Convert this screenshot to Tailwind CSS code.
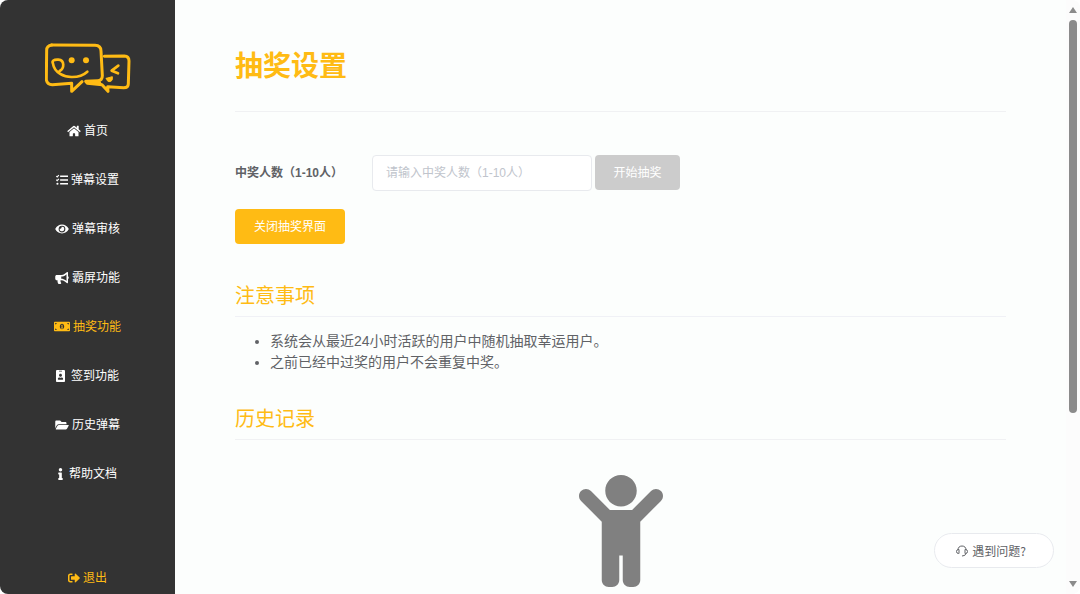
<!DOCTYPE html>
<html lang="zh-CN">

<head>
	<meta charset="UTF-8" />
	<meta name="viewport" content="width=device-width, initial-scale=1.0" />
	<script src="https://cdn.jsdelivr.net/npm/@tailwindcss/browser@4"></script>
	<title>抽奖设置</title>
</head>

<body class="bg-white text-xs text-[#606266] font-['Liberation_Sans','Noto_Sans_CJK_SC',sans-serif]">
	<div class="flex h-screen overflow-hidden rounded-lg bg-[#fcfefd]">

		<!-- sidebar -->
		<aside class="flex w-[175px] shrink-0 flex-col items-center bg-[#333] pt-[43px] pb-2 text-white">
			<a href="#" aria-label="首页">
				<svg class="h-[51px] w-[86px]" viewBox="2 0 258 153" fill="none" stroke="#ffbb14" stroke-width="9"
					stroke-linecap="round" stroke-linejoin="round">
					<path d="M22 6L152 7Q170 8 170 24L174 98Q174 112 160 113L124 115L129 121L173 125L191 145L190 131L238 134Q252 134 252 122L254 54Q254 40 240 39L180 40" />
					<path d="M22 6Q7 8 7 22L6 110Q8 124 24 125L82 121L82 145L113 116" />
					<path d="M128 117L166 115L171 124L134 122Z" fill="#ffbb14" stroke-width="4" />
					<path d="M46 84C60 76 62 52 42 50C28 49 22 54 26 62C30 90 60 103 84 102C104 102 118 96 129 86" stroke-width="8" />
					<path d="M222 68L202 83L221 91" stroke-width="8" />
					<path d="M186 106L204 101Q206 116 194 116Q188 116 186 106Z" fill="#ffbb14" stroke-width="3" />
					<circle cx="82" cy="52" r="9" fill="#ffbb14" stroke="none" />
					<circle cx="125" cy="52" r="9" fill="#ffbb14" stroke="none" />
				</svg>
			</a>

			<nav class="mt-3 flex w-full flex-col">
				<a href="#" class="flex h-[49px] items-center justify-center gap-[3px]">
					<svg class="h-3 w-[14px] fill-current" viewBox="0 0 576 512"><path d="M280.37 148.26L96 300.11V464a16 16 0 0 0 16 16l112.06-.29a16 16 0 0 0 15.92-16V368a16 16 0 0 1 16-16h64a16 16 0 0 1 16 16v95.64a16 16 0 0 0 16 16.05L464 480a16 16 0 0 0 16-16V300L295.67 148.26a12.19 12.19 0 0 0-15.3 0zM571.6 251.47L488 182.56V44.05a12 12 0 0 0-12-12h-56a12 12 0 0 0-12 12v72.61L318.47 43a48 48 0 0 0-61 0L4.34 251.47a12 12 0 0 0-1.6 16.9l25.5 31A12 12 0 0 0 45.15 301l235.22-193.74a12.19 12.19 0 0 1 15.3 0L530.9 301a12 12 0 0 0 16.9-1.6l25.5-31a12 12 0 0 0-1.7-16.93z" /></svg>
					<span>首页</span>
				</a>
				<a href="#" class="flex h-[49px] items-center justify-center gap-[3px]">
					<svg class="size-3" viewBox="0 0 512 512" fill="none" stroke="currentColor" stroke-width="48">
						<path d="M12 88L50 124L122 46M12 246L50 282L122 204" />
						<path d="M176 96H512M176 256H512M176 416H512" stroke-width="74" />
						<circle cx="62" cy="416" r="46" fill="currentColor" stroke="none" />
					</svg>
					<span>弹幕设置</span>
				</a>
				<a href="#" class="flex h-[49px] items-center justify-center gap-[3px]">
					<svg class="h-3 w-[14px] fill-current" viewBox="0 0 576 512"><path d="M572.52 241.4C518.29 135.59 410.93 64 288 64S57.68 135.64 3.48 241.41a32.35 32.35 0 0 0 0 29.19C57.71 376.41 165.07 448 288 448s230.32-71.64 284.52-177.41a32.35 32.35 0 0 0 0-29.19zM288 400a144 144 0 1 1 144-144 143.93 143.93 0 0 1-144 144zm0-240a95.31 95.31 0 0 0-25.31 3.79 47.85 47.85 0 0 1-66.9 66.9A95.78 95.78 0 1 0 288 160z" /></svg>
					<span>弹幕审核</span>
				</a>
				<a href="#" class="flex h-[49px] items-center justify-center gap-[3px]">
					<svg class="h-3 w-[14px] fill-current" viewBox="0 0 576 512"><path d="M576 240c0-23.63-12.95-44.04-32-55.12V32.01C544 23.26 537.02 0 512 0c-7.12 0-14.19 2.38-19.98 7.02l-85.03 68.03C364.28 109.19 310.66 128 256 128H64c-35.35 0-64 28.65-64 64v96c0 35.35 28.65 64 64 64h33.7c-1.39 10.48-2.18 21.14-2.18 32 0 39.77 9.26 77.35 25.56 110.94 5.19 10.69 16.52 17.06 28.4 17.06h74.28c26.05 0 41.69-29.84 25.9-50.56-16.4-21.52-26.15-48.36-26.15-77.44 0-11.11 1.62-21.79 4.41-32H256c54.66 0 108.28 18.81 150.98 52.95l85.03 68.03a32.023 32.023 0 0 0 19.98 7.02c24.92 0 32-22.78 32-32V295.13C563.05 284.04 576 263.63 576 240zm-96 141.42l-33.05-26.44C392.95 311.78 325.12 288 256 288v-96c69.12 0 136.95-23.78 190.95-66.98L480 98.58v282.84z" /></svg>
					<span>霸屏功能</span>
				</a>
				<a href="#" class="flex h-[49px] items-center justify-center gap-[3px] text-[#ffbb14]">
					<svg class="h-[13px] w-4 fill-current" viewBox="0 0 640 512">
						<path fill-rule="evenodd" d="M32 64H608Q640 64 640 96V416Q640 448 608 448H32Q0 448 0 416V96Q0 64 32 64ZM320 144C270 144 232 194 232 256S270 368 320 368S408 318 408 256S370 144 320 144ZM48 112V176Q104 168 112 112ZM592 112V176Q536 168 528 112ZM48 400V336Q104 344 112 400ZM592 400V336Q536 344 528 400Z" />
						<path d="M288 200L320 184H340V304H364V332H280V304H304V220H288Z" />
					</svg>
					<span>抽奖功能</span>
				</a>
				<a href="#" class="flex h-[49px] items-center justify-center gap-[6px]">
					<svg class="h-3 w-[9px] fill-current" viewBox="0 0 384 512"><path d="M336 0H48C21.5 0 0 21.5 0 48v416c0 26.5 21.5 48 48 48h288c26.5 0 48-21.5 48-48V48c0-26.5-21.5-48-48-48zM144 32h96c8.8 0 16 7.2 16 16s-7.2 16-16 16h-96c-8.8 0-16-7.2-16-16s7.2-16 16-16zm48 128c35.3 0 64 28.7 64 64s-28.7 64-64 64-64-28.7-64-64 28.7-64 64-64zm112 236.8c0 10.6-10 19.2-22.4 19.2H102.4C90 416 80 407.4 80 396.8v-19.2c0-31.8 30.1-57.6 67.2-57.6h5c12.3 5.1 25.7 8 39.8 8s27.6-2.9 39.8-8h5c37.1 0 67.2 25.8 67.2 57.6v19.2z" /></svg>
					<span>签到功能</span>
				</a>
				<a href="#" class="flex h-[49px] items-center justify-center gap-[3px]">
					<svg class="h-3 w-[14px] fill-current" viewBox="0 0 576 512"><path d="M572.694 292.093L500.27 416.248A63.997 63.997 0 0 1 444.989 448H45.025c-18.523 0-30.064-20.093-20.731-36.093l72.424-124.155A64 64 0 0 1 152 256h399.964c18.523 0 30.064 20.093 20.73 36.093zM152 224h328v-48c0-26.51-21.49-48-48-48H272l-64-64H48C21.49 64 0 85.49 0 112v278.046l69.077-118.418C86.214 242.25 117.989 224 152 224z" /></svg>
					<span>历史弹幕</span>
				</a>
				<a href="#" class="flex h-[49px] items-center justify-center gap-[6px]">
					<svg class="h-3 w-[5px] fill-current" viewBox="0 0 192 512"><path d="M20 424.229h20V279.771H20c-11.046 0-20-8.954-20-20V212c0-11.046 8.954-20 20-20h112c11.046 0 20 8.954 20 20v212.229h20c11.046 0 20 8.954 20 20V492c0 11.046-8.954 20-20 20H20c-11.046 0-20-8.954-20-20v-47.771c0-11.046 8.954-20 20-20zM96 0C56.235 0 24 32.235 24 72s32.235 72 72 72 72-32.235 72-72S135.764 0 96 0z" /></svg>
					<span>帮助文档</span>
				</a>
			</nav>

			<a href="#" class="mt-auto flex items-center gap-[3px] text-[#ffbb14]">
				<svg class="size-3 fill-current" viewBox="0 0 512 512"><path d="M497 273L329 441c-15 15-41 4.500-41-17v-96H152c-13.300 0-24-10.700-24-24v-96c0-13.300 10.700-24 24-24h136V88c0-21.400 25.900-32 41-17l168 168c9.300 9.400 9.300 24.600 0 34zM192 436v-40c0-6.600-5.400-12-12-12H96c-17.700 0-32-14.300-32-32V160c0-17.700 14.300-32 32-32h84c6.600 0 12-5.400 12-12V76c0-6.600-5.400-12-12-12H96c-53 0-96 43-96 96v192c0 53 43 96 96 96h84c6.600 0 12-5.400 12-12z" /></svg>
				<span>退出</span>
			</a>
		</aside>

		<main class="min-w-0 flex-1 overflow-hidden px-[60px] pt-[51px]">
			<h1 class="border-b border-[#f0f1f3] pb-7 text-[28px] leading-8 font-bold text-[#ffbb14]">抽奖设置</h1>

			<form class="mt-[43px]">
				<div class="flex items-start">
					<label for="winner-count" class="w-[137px] leading-9 font-bold">中奖人数（1-10人）</label>
					<input type="text" id="winner-count" placeholder="请输入中奖人数（1-10人）"
						class="h-9 w-[220px] rounded border border-[#e8eaee] bg-white px-[13px] placeholder:text-[#c0c4cc] focus:border-[#ffbb14] focus:outline-none" />
					<button type="button" disabled class="ml-[3px] h-[35px] w-[85px] rounded bg-[#ccc] text-white">开始抽奖</button>
				</div>
				<button type="button" class="mt-[18px] h-[35px] w-[110px] rounded bg-[#ffbb14] text-white">关闭抽奖界面</button>
			</form>

			<h2 class="mt-[38px] border-b border-[#f0f1f6] pb-[6px] text-xl leading-7 text-[#ffbb14]">注意事项</h2>
			<ul class="mt-[14px] list-disc pl-[35px] text-sm leading-[21px]">
				<li>系统会从最近24小时活跃的用户中随机抽取幸运用户。</li>
				<li>之前已经中过奖的用户不会重复中奖。</li>
			</ul>

			<h2 class="mt-8 border-b border-[#f0f1f3] pb-[6px] text-xl leading-7 text-[#ffbb14]">历史记录</h2>
			<svg class="mx-auto mt-[35px] h-28 w-[84px] fill-[#808080]" viewBox="0 0 384 512"><path d="M120 72c0-39.765 32.235-72 72-72s72 32.235 72 72c0 39.764-32.235 72-72 72s-72-32.236-72-72zm254.627 1.373c-12.496-12.497-32.758-12.497-45.254 0L242.745 160H141.254L54.627 73.373c-12.496-12.497-32.758-12.497-45.254 0-12.497 12.497-12.497 32.758 0 45.255L104 213.254V480c0 17.673 14.327 32 32 32h16c17.673 0 32-14.327 32-32V368h16v112c0 17.673 14.327 32 32 32h16c17.673 0 32-14.327 32-32V213.254l94.627-94.627c12.497-12.496 12.497-32.757 0-45.254z" /></svg>
		</main>

		<!-- scrollbar -->
		<div class="flex w-[14px] shrink-0 flex-col items-center bg-[#fcfcfc] py-[7px]" aria-hidden="true">
			<svg class="h-[6px] w-2 fill-[#8b8b8b]" viewBox="0 0 8 6"><path d="M4 0L8 6H0Z" /></svg>
			<div class="mt-[7px] flex w-2 flex-1 flex-col">
				<div class="h-[70%] rounded-full bg-[#8b8b8b]"></div>
			</div>
			<svg class="h-[6px] w-2 fill-[#8b8b8b]" viewBox="0 0 8 6"><path d="M0 0H8L4 6Z" /></svg>
		</div>
	</div>

	<!-- help button floating over the page -->
	<button type="button"
		class="fixed right-[26px] bottom-[26px] flex h-[35px] w-[120px] items-center justify-center gap-1 rounded-full border border-[#e8eaee] bg-white pr-[6px] font-['Noto_Sans_CJK_SC',sans-serif]">
		<svg class="size-3" viewBox="0 0 24 24" fill="none" stroke="currentColor" stroke-width="2">
			<path d="M4 10C4 5 7 2 12 2S20 5 20 10M6 9V17H5Q1 17 1 13T5 9ZM18 9V17H19Q23 17 23 13T19 9ZM20 17Q19 22 12 22" />
		</svg>
		<span>遇到问题?</span>
	</button>
</body>

</html>
